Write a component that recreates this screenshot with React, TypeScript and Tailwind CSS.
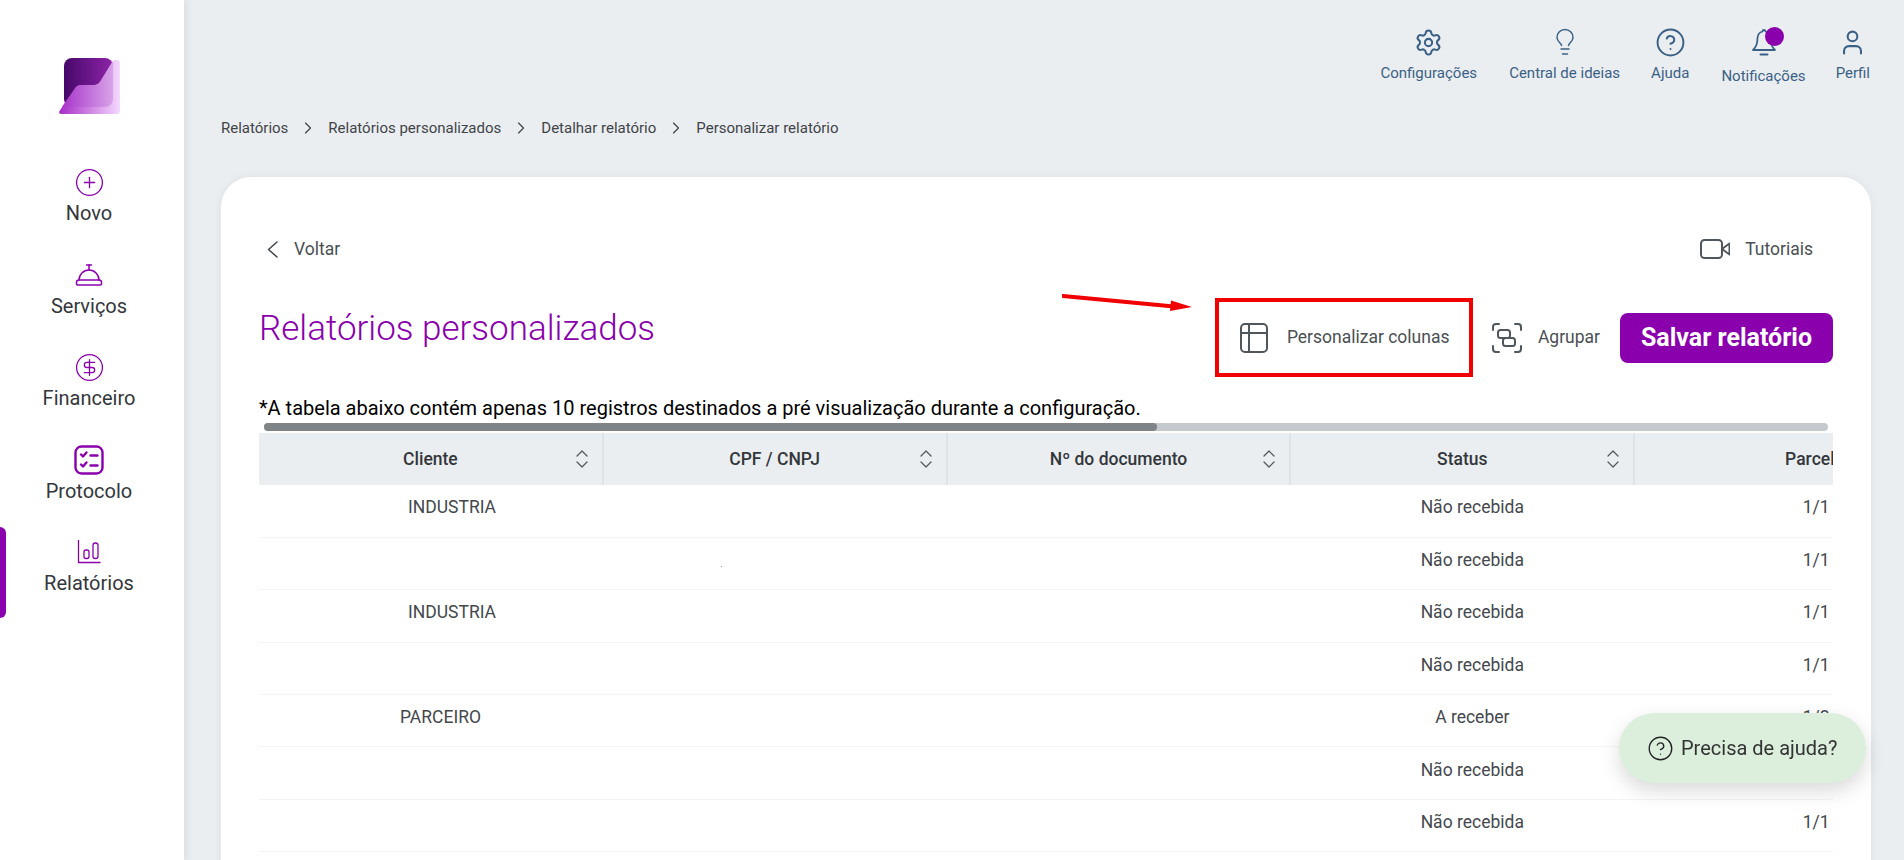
import { ChevronRight, ChevronsUpDown, CirclePlus, ConciergeBell, CircleDollarSign, Settings, CircleHelp, User } from "lucide-react";

const rows = [
  { client: "INDUSTRIA", indent: "pl-[149px]", status: "Não recebida", parcel: "1/1" },
  { client: "", indent: "", status: "Não recebida", parcel: "1/1" },
  { client: "INDUSTRIA", indent: "pl-[149px]", status: "Não recebida", parcel: "1/1" },
  { client: "", indent: "", status: "Não recebida", parcel: "1/1" },
  { client: "PARCEIRO", indent: "pl-[141px]", status: "A receber", parcel: "1/2" },
  { client: "", indent: "", status: "Não recebida", parcel: "1/1" },
  { client: "", indent: "", status: "Não recebida", parcel: "1/1" },
  { client: "", indent: "", status: "Não recebida", parcel: "1/1" },
];

function Logo() {
  return (
    <svg width="62" height="58" viewBox="0 0 62 58" className="ml-[2px] block">
      <defs>
        <linearGradient id="lgDark" x1="0" x2="1" y1="0" y2="0">
          <stop offset="0" stopColor="#46086a" />
          <stop offset="1" stopColor="#8e24a8" />
        </linearGradient>
        <linearGradient id="lgPale" x1="0" x2="1" y1="0" y2="0">
          <stop offset="0" stopColor="#a62cc8" />
          <stop offset="1" stopColor="#f4dafd" />
        </linearGradient>
        <linearGradient id="lgMid" x1="0" x2="1" y1="0" y2="0">
          <stop offset="0" stopColor="#a835c9" />
          <stop offset="1" stopColor="#d7a3e8" />
        </linearGradient>
      </defs>
      <rect x="5" y="0" width="49" height="49" rx="8" fill="url(#lgDark)" />
      <path d="M0.5 53 L17 29 Q19 27 22 27 H36 Q39 27 41 24 L54 3 Q55 2 57 2 H58 Q61 2 61 5 V53 Q61 56 58 56 H3 Q-1 56 0.5 53 Z" fill="url(#lgPale)" />
      <path d="M5 46 L17 29 Q19 27 22 27 H36 Q39 27 41 24 L54 3 V40 Q54 49 45 49 H8 Q5 49 3 49 Z" fill="url(#lgMid)" />
    </svg>
  );
}

function ProtocolIcon() {
  return (
    <svg width="30" height="30" viewBox="0 0 30 30" fill="none" stroke="#8a00ac" strokeLinecap="round" strokeLinejoin="round">
      <rect x="1.5" y="1.5" width="27" height="27" rx="6" strokeWidth="2.4" />
      <path d="M7 9.5l2 2 3.5-4M7 19.5l2 2 3.5-4M16.5 10.5h7M16.5 20.5h7" strokeWidth="2.4" />
    </svg>
  );
}

function ReportIcon() {
  return (
    <svg width="26" height="26" viewBox="0 0 26 26" fill="none" stroke="#8a00ac" strokeWidth="1.3">
      <path d="M2.5 1v22.5h22" />
      <rect x="8" y="11" width="5" height="8.5" rx="2" />
      <rect x="17" y="4" width="5" height="15.5" rx="2.3" />
    </svg>
  );
}

function BulbIcon() {
  return (
    <svg width="28" height="28" viewBox="0 0 28 28" fill="none" stroke="#3a6185" strokeWidth="1.5" strokeLinecap="round" strokeLinejoin="round">
      <path d="M10.500 17.500c0-2.500-4.500-3.500-4.500-8a8 8 0 0 1 16 0c0 4.500-4.500 5.500-4.500 8" />
      <path d="M10 21h8M11.500 26h5" />
    </svg>
  );
}

function BellIcon() {
  return (
    <svg width="28" height="28" viewBox="0 0 28 28" fill="none" stroke="#3a6185" strokeWidth="1.8" strokeLinecap="round" strokeLinejoin="round">
      <path d="M14 2a1.500 1.500 0 0 1 1.500 1.500 7 7 0 0 1 5 6.500c0 6 1 9 4.500 12H3c3.500-3 4.500-6 4.500-12a7 7 0 0 1 5-6.500A1.500 1.500 0 0 1 14 2Z" />
      <path d="M10.500 26.500h7" strokeWidth="2" />
    </svg>
  );
}

function TableIcon() {
  return (
    <svg width="28" height="30" viewBox="0 0 28 30" fill="none" stroke="#50575c" strokeWidth="2" strokeLinejoin="round">
      <rect x="1" y="1" width="26" height="28" rx="4" />
      <path d="M1 10h26M9 1v28" />
    </svg>
  );
}

function GroupIcon() {
  return (
    <svg width="30" height="30" viewBox="0 0 30 30" fill="none" stroke="#50575c" strokeWidth="2" strokeLinecap="round" strokeLinejoin="round">
      <path d="M1 7V4a3 3 0 0 1 3-3h3M23 1h3a3 3 0 0 1 3 3v3M29 23v3a3 3 0 0 1-3 3h-3M7 29H4a3 3 0 0 1-3-3v-3" />
      <rect x="6" y="7" width="12" height="8" rx="2.500" />
      <rect x="11" y="15" width="12" height="8" rx="2.500" />
    </svg>
  );
}

function VideoIcon() {
  return (
    <svg width="30" height="20" viewBox="0 0 30 20" fill="none" stroke="#50575c" strokeWidth="2" strokeLinejoin="round">
      <rect x="1" y="1" width="21" height="18" rx="3.500" />
      <path d="M22 10l7.500-5.500v11Z" />
    </svg>
  );
}

function BackIcon() {
  return (
    <svg width="11" height="17" viewBox="0 0 11 17" fill="none" stroke="#3f4448" strokeWidth="1.5" strokeLinecap="round" strokeLinejoin="round">
      <path d="M10 1L1.500 8.500 10 16" />
    </svg>
  );
}

function NavItem({ icon, label }: { icon: React.ReactNode; label: string }) {
  return (
    <div className="flex h-[92.5px] flex-col items-center">
      <div className="flex h-[32px] items-center justify-center">{icon}</div>
      <span className="mt-[3px] text-[20px] leading-[24px] text-[#33373b]">{label}</span>
    </div>
  );
}

function TopItem({ icon, label, low, extra = "" }: { icon: React.ReactNode; label: string; low?: boolean; extra?: string }) {
  return (
    <div className={`flex flex-col items-center ${extra}`}>
      <div className="relative flex h-[28px] items-center justify-center">{icon}</div>
      <span className={`text-[15px] leading-[20px] text-[#3a6185] ${low ? "mt-[10px]" : "mt-[7px]"}`}>{label}</span>
    </div>
  );
}

function HeadCell({ label, sort = true, extra = "" }: { label: string; sort?: boolean; extra?: string }) {
  return (
    <th className="relative h-[52px] border-r-2 border-[#dfe3e6] p-0 font-medium">
      <span className={`block text-center text-[17.500px] text-[#33373b] ${extra}`}>{label}</span>
      {sort && (
        <ChevronsUpDown size={24} strokeWidth={1.2} className="absolute right-[8px] top-[14px] text-[#4f5559]" />
      )}
    </th>
  );
}

export default function App() {
  const crumbs = ["Relatórios", "Relatórios personalizados", "Detalhar relatório", "Personalizar relatório"];

  return (
    <div className="flex h-screen w-full overflow-hidden bg-[#ebeef1] font-['Roboto',sans-serif]">
      {/* Sidebar */}
      <aside className="relative z-10 flex w-[184px] shrink-0 flex-col items-center bg-white pr-[6px] pt-[58px] shadow-[2px_0_8px_rgba(0,0,0,0.08)]">
        <Logo />
        <nav className="mt-[50px] flex w-full flex-col">
          <NavItem icon={<CirclePlus size={31} strokeWidth={1} className="text-[#8a00ac]" />} label="Novo" />
          <NavItem icon={<ConciergeBell size={30} strokeWidth={1.2} className="text-[#8a00ac]" />} label="Serviços" />
          <NavItem icon={<CircleDollarSign size={31} strokeWidth={1} className="text-[#8a00ac]" />} label="Financeiro" />
          <NavItem icon={<ProtocolIcon />} label="Protocolo" />
          <NavItem icon={<ReportIcon />} label="Relatórios" />
        </nav>
        <div className="absolute left-0 top-[527px] h-[91px] w-[6px] rounded-r-[6px] bg-[#8a00ac]" />
      </aside>

      <main className="relative min-w-0 flex-1">
        {/* Top bar */}
        <div className="flex justify-end gap-8 pr-[34px] pt-[28px]">
          <TopItem icon={<Settings size={29} strokeWidth={1.7} className="text-[#3a6185]" />} label="Configurações" />
          <TopItem icon={<BulbIcon />} label="Central de ideias" extra="-mr-[1px]" />
          <TopItem icon={<CircleHelp size={31} strokeWidth={1.5} className="text-[#3a6185]" />} label="Ajuda" />
          <TopItem
            icon={
              <>
                <BellIcon />
                <span className="absolute left-[15px] top-[-1px] h-[19px] w-[19px] rounded-full bg-[#8a00ac]" />
              </>
            }
            label="Notificações"
            low
          />
          <TopItem icon={<User size={29} strokeWidth={1.7} className="text-[#3a6185]" />} label="Perfil" extra="-ml-[2px]" />
        </div>

        {/* Breadcrumb */}
        <div className="ml-[37px] mt-[30px] flex h-[24px] items-center text-[15px] text-[#3f4448]">
          {crumbs.map((c, i) => (
            <div key={c} className="flex items-center">
              {i > 0 && <ChevronRight size={20} strokeWidth={1.4} className="mx-[10px] text-[#3f4448]" />}
              <span>{c}</span>
            </div>
          ))}
        </div>

        {/* Card */}
        <section className="relative ml-[37px] mr-[33px] mt-[37px] rounded-t-[30px] bg-white pb-10 pl-[38px] pr-[38px] pt-[60px] shadow-[0_0_10px_rgba(0,0,0,0.06)]">
          <div className="flex h-[24px] items-center justify-between pl-[8px] pr-[20px]">
            <div className="flex items-center gap-[16px] text-[17.500px] text-[#4a4f53]">
              <BackIcon />
              <span>Voltar</span>
            </div>
            <div className="flex items-center gap-[15px] text-[17.500px] text-[#4a4f53]">
              <VideoIcon />
              <span>Tutoriais</span>
            </div>
          </div>

          <div className="mt-[37px] flex items-center justify-between">
            <h1 className="-mt-[18px] text-[35px] font-light leading-[44px] text-[#8a00ac]">Relatórios personalizados</h1>
            <div className="flex items-center gap-[19px]">
              <button className="flex h-[79px] w-[258px] items-center gap-[19px] border-4 border-[#f00000] pl-[21px] text-[17.500px] text-[#4a4f53]">
                <TableIcon />
                <span>Personalizar colunas</span>
              </button>
              <button className="flex items-center gap-[16px] text-[17.500px] text-[#4a4f53]">
                <GroupIcon />
                <span>Agrupar</span>
              </button>
              <button className="ml-[1px] h-[50px] w-[213px] rounded-[8px] bg-[#8a00ac] text-[25px] font-bold text-white">Salvar relatório</button>
            </div>
          </div>

          {/* Arrow */}
          <svg width="134" height="18" viewBox="0 0 134 18" className="absolute left-[841px] top-[117px]">
            <path d="M1 2 L112 12.500" stroke="#f00000" strokeWidth="4" strokeLinecap="round" />
            <path d="M109 6.500 L130 13 L108 17 Z" fill="#f00000" />
          </svg>

          <p className="mt-[19px] text-[20px] leading-[24px] text-black">
            *A tabela abaixo contém apenas 10 registros destinados a pré visualização durante a configuração.
          </p>

          {/* Scrollbar */}
          <div className="ml-[5px] mr-[5px] mt-[3px] h-[8px] rounded-full bg-[#c4c9cc]">
            <div className="h-[8px] w-[893px] rounded-full bg-[#808487]" />
          </div>

          <div className="mt-[2px] overflow-hidden">
            <table className="w-[1720px] table-fixed border-collapse">
              <thead>
                <tr className="bg-[#ebeef1]">
                  <HeadCell label="Cliente" />
                  <HeadCell label="CPF / CNPJ" />
                  <HeadCell label="Nº do documento" />
                  <HeadCell label="Status" />
                  <HeadCell label="Parcelas" sort={false} extra="pl-[26px]" />
                </tr>
              </thead>
              <tbody>
                {rows.map((r, i) => (
                  <tr key={i} className="h-[52.4px] border-b border-[#f3f4f6] text-[17.500px] text-[#44484c]">
                    <td className={`p-0 pb-[7px] ${r.indent}`}>{r.client}</td>
                    <td className="relative p-0">
                      {i === 1 && <span className="absolute left-[118px] top-[28px] h-px w-px bg-[#888]" />}
                    </td>
                    <td className="p-0" />
                    <td className="p-0 pb-[7px] pl-[20px] text-center">{r.status}</td>
                    <td className="p-0 pb-[7px] pl-[20px] text-center">{r.parcel}</td>
                  </tr>
                ))}
              </tbody>
            </table>
          </div>
        </section>
      </main>

      {/* Help pill */}
      <div className="fixed left-[1619px] top-[713px] z-20 flex h-[70px] w-[247px] items-center gap-[7px] rounded-full bg-[#dcefdc] pl-[28px] text-[20px] text-[#333] shadow-[0_8px_20px_rgba(0,0,0,0.15)]">
        <CircleHelp size={27} strokeWidth={1.2} className="text-[#222]" />
        <span>Precisa de ajuda?</span>
      </div>
    </div>
  );
}
